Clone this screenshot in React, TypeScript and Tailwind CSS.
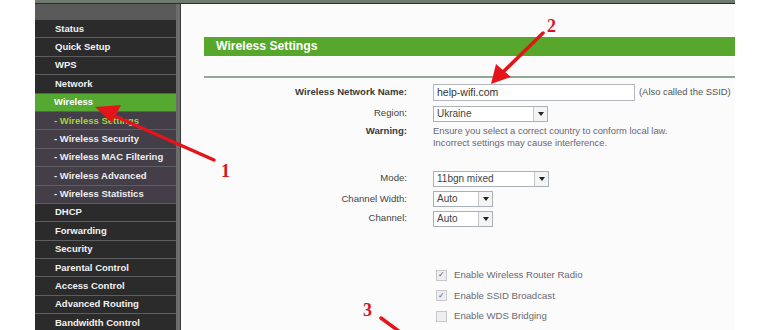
import React from "react";

const menu = [
  { label: "Status" },
  { label: "Quick Setup" },
  { label: "WPS" },
  { label: "Network" },
  { label: "Wireless", active: true },
  { label: "- Wireless Settings", sub: true, current: true },
  { label: "- Wireless Security", sub: true },
  { label: "- Wireless MAC Filtering", sub: true },
  { label: "- Wireless Advanced", sub: true },
  { label: "- Wireless Statistics", sub: true },
  { label: "DHCP" },
  { label: "Forwarding" },
  { label: "Security" },
  { label: "Parental Control" },
  { label: "Access Control" },
  { label: "Advanced Routing" },
  { label: "Bandwidth Control" },
];

const Select = ({ value, width }: { value: string; width: string }) => (
  <div className={`flex items-center h-[16px] border border-[#aab0b8] bg-white ${width}`}>
    <span className="flex-1 pl-[3px] text-[10px] text-[#444] leading-none">{value}</span>
    <span className="w-[14px] h-[14px] border-l border-[#c4c8cc] bg-[#f4f4f4] flex items-center justify-center">
      <span className="w-0 h-0 border-l-[3px] border-r-[3px] border-t-[4px] border-l-transparent border-r-transparent border-t-[#222]" />
    </span>
  </div>
);

const Check = ({ checked, label }: { checked?: boolean; label: string }) => (
  <div className="flex items-center h-[20.5px]">
    <span className="w-[11px] h-[11px] border border-[#c8c8cc] bg-[#eeeef2] flex items-center justify-center text-[8px] leading-none text-[#556]">
      {checked ? "✓" : ""}
    </span>
    <span className="ml-[7px] text-[9.6px] text-[#6a6a72]">{label}</span>
  </div>
);

const Row = ({ label, bold, children, className = "" }: { label: string; bold?: boolean; children: React.ReactNode; className?: string }) => (
  <div className={`flex items-center ${className}`}>
    <div className={`w-[203px] shrink-0 text-right text-[9.6px] ${bold ? "font-bold text-[#3a3a3a]" : "text-[#444]"}`}>{label}</div>
    <div className="ml-[26px] flex items-center shrink-0">{children}</div>
  </div>
);

export default function App() {
  return (
    <div className="relative w-[770px] h-[330px] bg-white overflow-hidden font-['Liberation_Sans',Arial,sans-serif]">
      <div className="ml-[35px] w-[700px] h-[330px] flex flex-col">
        <div className="h-[4px] shrink-0 bg-[#6f7a6f] border-b border-[#2e2e2e]" />
        <div className="flex flex-1 min-h-0">
          {/* sidebar */}
          <div className="flex">
            <div className="w-[141px] flex flex-col bg-[#2b2b2b] overflow-hidden">
              <div className="h-[16px] shrink-0 bg-[#5a5a5a]" />
              {menu.map((m) => (
                <div
                  key={m.label}
                  className={`h-[18.4px] shrink-0 flex items-center border-b border-[#5e5e60] text-[9.5px] font-bold ${
                    m.active
                      ? "bg-[#55a830] text-white pl-[19px]"
                      : m.sub
                      ? "bg-[#433e48] pl-[19px]"
                      : "bg-[#2b2b2b] text-[#f2f2f2] pl-[20px]"
                  } ${m.sub ? (m.current ? "text-[#a6d23c]" : "text-[#eeeeee]") : ""}`}
                >
                  {m.label}
                </div>
              ))}
            </div>
            <div className="w-[4px] bg-[#6c6c6c]" />
            <div className="w-[1px] bg-[#3a3a3a]" />
          </div>

          {/* content */}
          <div className="flex-1 min-w-0 bg-[#fbfbfb] pl-[23px] pt-[33px]">
            <div className="h-[19px] bg-[#56a72c] flex items-center pl-[12px]">
              <span className="text-white font-bold text-[12.2px]">Wireless Settings</span>
            </div>
            <div className="mt-[20px] h-[2px] bg-[#93a893]" />

            <Row label="Wireless Network Name:" bold className="mt-[4px] h-[21px]">
              <div className="w-[202px] h-[17px] border border-[#b4b8bd] bg-white flex items-center pl-[3px] text-[10.5px] text-[#333]">
                help-wifi.com
              </div>
              <span className="ml-[4px] whitespace-nowrap text-[9.4px] text-[#555]">(Also called the SSID)</span>
            </Row>
            <Row label="Region:" className="h-[21px]">
              <Select value="Ukraine" width="w-[115px]" />
            </Row>
            <div className="flex mt-[1px]">
              <div className="w-[203px] shrink-0 text-right text-[9.6px] font-bold text-[#3a3a3a] leading-[12px]">Warning:</div>
              <div className="ml-[26px] text-[9.4px] leading-[11.5px] text-[#6a6678]">
                Ensure you select a correct country to conform local law.
                <br />
                Incorrect settings may cause interference.
              </div>
            </div>

            <Row label="Mode:" className="mt-[20px] h-[21px]">
              <Select value="11bgn mixed" width="w-[116px]" />
            </Row>
            <Row label="Channel Width:" className="h-[20px]">
              <Select value="Auto" width="w-[60px]" />
            </Row>
            <Row label="Channel:" className="h-[19px]">
              <Select value="Auto" width="w-[60px]" />
            </Row>

            <div className="ml-[232px] mt-[37px] flex flex-col">
              <Check checked label="Enable Wireless Router Radio" />
              <Check checked label="Enable SSID Broadcast" />
              <Check label="Enable WDS Bridging" />
            </div>
          </div>
        </div>
      </div>

      {/* red annotation arrows */}
      <svg className="absolute inset-0 pointer-events-none" width="770" height="330" viewBox="0 0 770 330">
        <g fill="#e3151a" stroke="#e3151a">
          <line x1="214" y1="160" x2="108" y2="113" strokeWidth="3.5" strokeLinecap="round" />
          <polygon points="95,107 121,105 112,123" stroke="none" />
          <line x1="543" y1="33" x2="500" y2="75" strokeWidth="3.5" strokeLinecap="round" />
          <polygon points="491,84 496,64 511,77" stroke="none" />
          <line x1="381" y1="318" x2="400" y2="332" strokeWidth="3.5" strokeLinecap="round" />
        </g>
        <g fill="#d8141c" fontFamily="'Liberation Serif', serif" fontWeight="bold" fontSize="18">
          <text x="221" y="177">1</text>
          <text x="547" y="32">2</text>
          <text x="363" y="316">3</text>
        </g>
      </svg>
    </div>
  );
}
